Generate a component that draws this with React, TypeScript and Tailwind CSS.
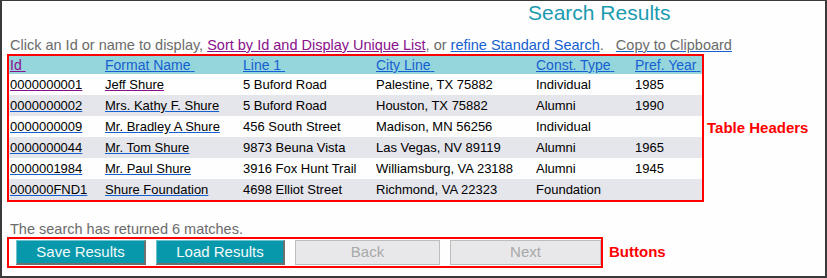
import React from 'react';

type Row = {
    id: string;
    name: string;
    line1: string;
    city: string;
    type: string;
    year: string;
    visited?: boolean;
};

const rows: Row[] = [
    { id: '0000000001', name: 'Jeff Shure', line1: '5 Buford Road', city: 'Palestine, TX 75882', type: 'Individual', year: '1985', visited: true },
    { id: '0000000002', name: 'Mrs. Kathy F. Shure', line1: '5 Buford Road', city: 'Houston, TX 75882', type: 'Alumni', year: '1990' },
    { id: '0000000009', name: 'Mr. Bradley A Shure', line1: '456 South Street', city: 'Madison, MN 56256', type: 'Individual', year: '' },
    { id: '0000000044', name: 'Mr. Tom Shure', line1: '9873 Beuna Vista', city: 'Las Vegas, NV 89119', type: 'Alumni', year: '1965' },
    { id: '0000001984', name: 'Mr. Paul Shure', line1: '3916 Fox Hunt Trail', city: 'Williamsburg, VA 23188', type: 'Alumni', year: '1945' },
    { id: '000000FND1', name: 'Shure Foundation', line1: '4698 Elliot Street', city: 'Richmond, VA 22323', type: 'Foundation', year: '' },
];

const headers = [
    { label: 'Id', w: 'w-[95px]', visited: true },
    { label: 'Format Name', w: 'w-[138px]' },
    { label: 'Line 1', w: 'w-[133px]' },
    { label: 'City Line', w: 'w-[160px]' },
    { label: 'Const. Type', w: 'w-[99px]' },
    { label: 'Pref. Year', w: 'w-[68px]' },
];

export default function App() {
    return (
        <div className="w-[827px] h-[278px] bg-[#fdfefd] border-[#3a3a3a] border-t border-l-2 border-r-2 border-b-2 font-['Liberation_Sans',Arial,sans-serif] overflow-hidden">
            {/* Title */}
            <h1 className="pl-[526px] h-[36px] text-[21px] leading-[24px] text-[#1b9bb0]">Search Results</h1>

            {/* Instructions */}
            <div className="pl-[8px] h-[17px] text-[14.5px] leading-[17px] text-[#6b6b6b] whitespace-nowrap">
                Click an Id or name to display,{' '}
                <a className="text-[#8a0f8c] underline">Sort by Id and Display Unique List</a>, or{' '}
                <a className="text-[#1560d0] underline">refine Standard Search</a>.&nbsp;&nbsp;&nbsp;
                <a className="underline decoration-[#1560d0]">Copy to Clipboard</a>
            </div>

            {/* Table */}
            <div className="flex items-center">
                <div className="ml-[5px] border-2 border-[#ff0000] w-[697px]">
                    <table className="table-fixed border-collapse text-[13px] text-black">
                        <thead>
                            <tr className="bg-[#95d5dc] h-[18px]">
                                {headers.map(h => (
                                    <th key={h.label} className={`${h.w} p-0 pl-px text-left font-normal text-[14px] leading-[18px]`}>
                                        <a className={`${h.visited ? 'text-[#8a0f8c]' : 'text-[#1560d0]'} underline`}>{h.label}&nbsp;</a>
                                    </th>
                                ))}
                            </tr>
                        </thead>
                        <tbody>
                            {rows.map((r, i) => (
                                <tr key={r.id} className={`h-[21px] ${i % 2 === 1 ? 'bg-[#e5e5ec]' : 'bg-[#fdfefd]'}`}>
                                    <td className="p-0 pl-px leading-[21px]">
                                        <a className={`underline ${i === 0 ? 'decoration-[#8a0f8c]' : 'decoration-[#1560d0]'}`}>{r.id}</a>
                                    </td>
                                    <td className="p-0 pl-px leading-[21px] whitespace-nowrap">
                                        <a className={`underline ${r.visited ? 'decoration-[#8a0f8c]' : 'decoration-[#1560d0]'}`}>{r.name}</a>
                                    </td>
                                    <td className="p-0 pl-px leading-[21px] whitespace-nowrap">{r.line1}</td>
                                    <td className="p-0 pl-px leading-[21px] whitespace-nowrap">{r.city}</td>
                                    <td className="p-0 pl-px leading-[21px]">{r.type}</td>
                                    <td className="p-0 pl-px leading-[21px]">{r.year}</td>
                                </tr>
                            ))}
                        </tbody>
                    </table>
                </div>
                <div className="ml-[3px] text-[15px] font-bold text-[#ff0000]">Table Headers</div>
            </div>

            {/* Status */}
            <div className="pl-[8px] mt-[19px] h-[16px] text-[14.5px] leading-[17px] text-[#6b6b6b]">The search has returned 6 matches.</div>

            {/* Buttons */}
            <div className="flex items-center">
                <div className="ml-[5px] w-[596px] h-[31px] border-2 border-[#ff0000] flex items-center gap-[10px] pl-[7px]">
                    <button className="w-[130px] h-[25px] bg-[#0898ac] text-[#f2fafa] text-[15px] border border-t-[#6fc3cf] border-l-[#6fc3cf] border-r-[#707070] border-b-[#707070] border-r-2 border-b-2">Save Results</button>
                    <button className="w-[129px] h-[25px] bg-[#0898ac] text-[#f2fafa] text-[15px] border border-t-[#6fc3cf] border-l-[#6fc3cf] border-r-[#707070] border-b-[#707070] border-r-2 border-b-2">Load Results</button>
                    <button disabled className="w-[145px] h-[25px] bg-[#e8e8ea] text-[#a8a8a8] text-[15px] border border-[#bdbdbd]">Back</button>
                    <button disabled className="w-[151px] h-[25px] bg-[#e8e8ea] text-[#a8a8a8] text-[15px] border border-[#bdbdbd]">Next</button>
                </div>
                <div className="ml-[6px] text-[15px] font-bold text-[#ff0000]">Buttons</div>
            </div>
        </div>
    );
}
